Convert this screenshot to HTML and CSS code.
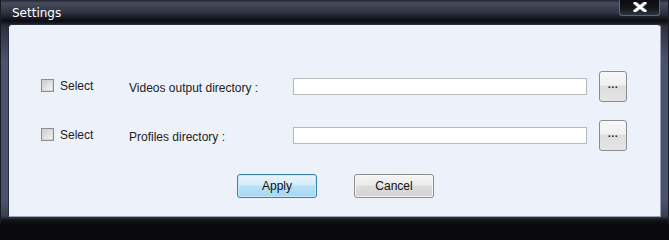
FILE: index.html
```html
<!DOCTYPE html>
<html>
<head>
<meta charset="utf-8">
<title>Settings</title>
<link rel="stylesheet" href="styles.css">
</head>
<body>
<div class="window">
  <div class="titlebar">
    <span class="title">Settings</span>
    <div class="close">
      <svg width="14" height="10" viewBox="0 0 14 10">
        <path d="M2 1 L12 9 M12 1 L2 9" stroke="#6d6f78" stroke-width="4.2" stroke-linecap="square"/>
        <path d="M2 1 L12 9 M12 1 L2 9" stroke="#ffffff" stroke-width="2.6" stroke-linecap="square"/>
      </svg>
    </div>
  </div>
  <div class="panel">
    <div class="grid">
      <label class="check"><span class="box"></span>Select</label>
      <span class="label">Videos output directory :</span>
      <span class="input"></span>
      <span class="browse">...</span>

      <label class="check"><span class="box"></span>Select</label>
      <span class="label">Profiles directory :</span>
      <span class="input"></span>
      <span class="browse">...</span>
    </div>
    <div class="actions">
      <span class="btn apply">Apply</span>
      <span class="btn cancel">Cancel</span>
    </div>
  </div>
</div>
</body>
</html>
```
FILE: styles.css
```css
html, body {
  margin: 0;
  padding: 0;
  background: #0a0a0c;
  overflow: hidden;
}
.window {
  width: 669px;
  height: 224px;
  box-sizing: border-box;
  display: flex;
  flex-direction: column;
  font-family: "Liberation Sans", Arial, sans-serif;
  font-size: 12px;
  color: #222;
  background: linear-gradient(to bottom, #23262f 0px, #474d5f 3px, #2e3240 13px, #0b0c10 21px, #2b2f3c 26px, #4b5270 60px, #4b5270 200px, #3a3f52 216px, #141519 220px, #0a0a0c 224px);
  border-left: 1px solid #1a1c22;
  border-right: 1px solid #1a1c22;
}
.titlebar {
  height: 24px;
  display: flex;
  justify-content: space-between;
  align-items: flex-start;
  padding-left: 11px;
  padding-right: 8px;
}
.title {
  color: #fff;
  font-family: "DejaVu Sans", sans-serif;
  font-size: 12px;
  line-height: 26px;
}
.close {
  width: 41px;
  height: 16px;
  box-sizing: border-box;
  border: 1px solid #5f6577;
  border-top: none;
  border-radius: 0 0 3px 3px;
  background: linear-gradient(to bottom, #0c0c0e 0, #141518 8px, #33374a 16px);
  display: flex;
  align-items: center;
  justify-content: center;
}
.close svg { display: block; margin-top: -1px; }
.panel {
  flex: 1;
  margin: 0 7px 7px 7px;
  background: #edf1f9;
  border: 1px solid #2b2f3b;
  border-bottom: 1px solid #9aa0b0;
  border-right: 1px solid #9aa0b0;
  border-radius: 4px 4px 0 0;
  padding: 46px 0 0 32px;
}
.grid {
  display: grid;
  grid-template-columns: 88px 164px 294px 28px;
  grid-template-rows: 31px 31px;
  row-gap: 18px;
  align-items: center;
}
.grid .browse { margin-left: 12px; }
.check {
  display: flex;
  align-items: center;
  gap: 6px;
  margin-top: -2px;
}
.box {
  width: 11px;
  height: 11px;
  border: 1px solid #8e8f8f;
  background: linear-gradient(135deg, #c8c8c8 0%, #e2e2e2 50%, #f6f6f6 100%);
  box-shadow: inset 0 0 0 1px #d5d5d5;
}
.label {
  margin-top: 2px;
}
.input {
  width: 294px;
  height: 17px;
  box-sizing: border-box;
  border: 1px solid #b8b8b8;
  background: #fff;
}
.browse {
  width: 28px;
  height: 31px;
  box-sizing: border-box;
  border: 1px solid #8c8c8c;
  border-radius: 3px;
  background: linear-gradient(to bottom, #f8f8f8 0%, #f0f0f0 45%, #dedede 50%, #e4e4e4 100%);
  display: flex;
  align-items: center;
  justify-content: center;
  font-size: 11px;
  font-weight: bold;
  color: #2a2a2a;
  letter-spacing: 0.5px;
  line-height: 1;
  padding-bottom: 4px;
}
.actions {
  display: flex;
  gap: 37px;
  padding-left: 196px;
  margin-top: 23px;
}
.btn {
  width: 80px;
  height: 24px;
  box-sizing: border-box;
  border-radius: 3px;
  display: flex;
  align-items: center;
  justify-content: center;
  color: #111;
}
.apply {
  border: 1px solid #3c7fb1;
  background: linear-gradient(to bottom, #e7f5fd 0%, #d6eefb 45%, #b9e1f8 50%, #a6d7f4 100%);
  box-shadow: inset 0 0 0 1px #c6e8fb;
}
.cancel {
  border: 1px solid #8a8a8a;
  background: linear-gradient(to bottom, #f4f4f4 0%, #ececec 45%, #dddddd 50%, #d2d2d2 100%);
  box-shadow: inset 0 0 0 1px #f8f8f8;
}
```
